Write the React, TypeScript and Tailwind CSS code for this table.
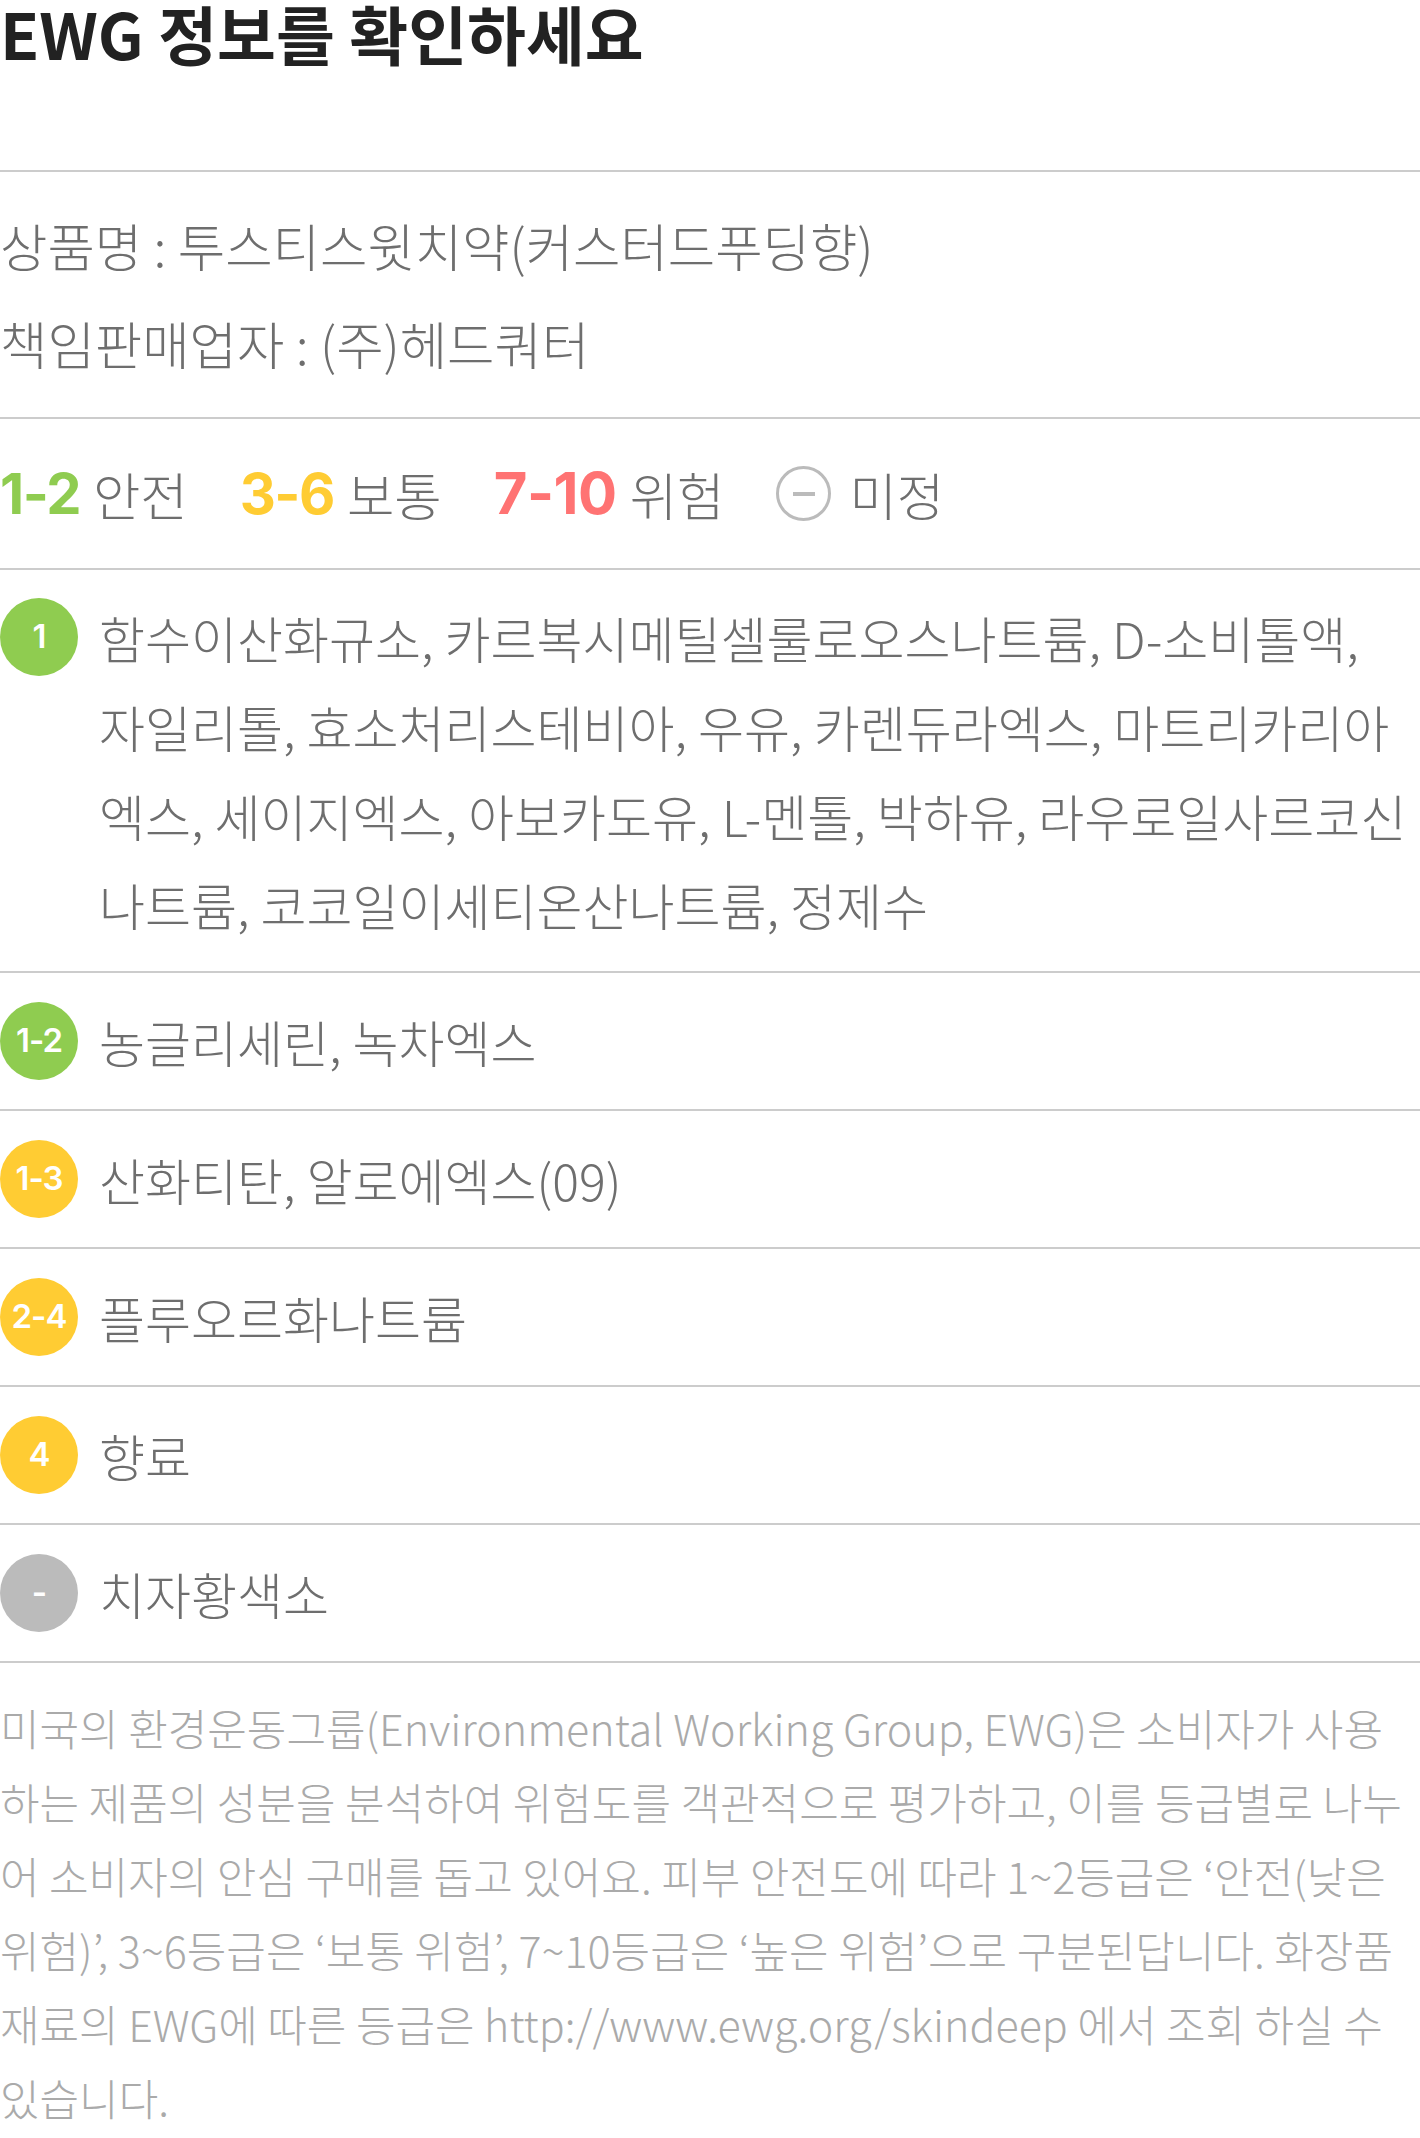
import React from 'react';

// ingredient lines are broken where the source layout breaks them
const ingredients = [
    {
        grade: '1',
        color: 'bg-[#8fcc50]',
        lines: [
            '함수이산화규소, 카르복시메틸셀룰로오스나트륨, D-소비톨액,',
            '자일리톨, 효소처리스테비아, 우유, 카렌듀라엑스, 마트리카리아',
            '엑스, 세이지엑스, 아보카도유, L-멘톨, 박하유, 라우로일사르코신',
            '나트륨, 코코일이세티온산나트륨, 정제수',
        ],
    },
    { grade: '1-2', color: 'bg-[#8fcc50]', lines: ['농글리세린, 녹차엑스'] },
    { grade: '1-3', color: 'bg-[#ffcc33]', lines: ['산화티탄, 알로에엑스(09)'] },
    { grade: '2-4', color: 'bg-[#ffcc33]', lines: ['플루오르화나트륨'] },
    { grade: '4', color: 'bg-[#ffcc33]', lines: ['향료'] },
    { grade: '-', color: 'bg-[#bbbbbb]', lines: ['치자황색소'] },
];

function Badge({ grade, color }: { grade: string; color: string }) {
    return (
        <div
            className={`${color} w-[78px] h-[78px] mt-[5px] shrink-0 rounded-full flex items-center justify-center text-white text-[33px] font-semibold font-['Inter',sans-serif] tracking-[-1px]`}
        >
            {grade}
        </div>
    );
}

export default function App() {
    return (
        <div className="w-[1420px] bg-white font-['Noto_Sans_CJK_KR','Noto_Sans',sans-serif]">
            {/* title */}
            <h1 className="h-[170px] text-[64px] leading-[64px] font-bold text-[#222222]">
                EWG 정보를 확인하세요
            </h1>

            {/* product info */}
            <div className="border-t-2 border-[#cccccc] pt-[24px] pb-[25px] text-[51.5px] leading-[98px] font-light text-[#6e6e6e]">
                <p>상품명 : 투스티스윗치약(커스터드푸딩향)</p>
                <p>책임판매업자 : (주)헤드쿼터</p>
            </div>

            {/* legend */}
            <div className="border-t-2 border-[#cccccc] h-[151px] flex items-center gap-[52px] text-[51.5px] font-light text-[#6e6e6e]">
                <div className="flex items-center gap-[13px]">
                    <span className="font-['Inter',sans-serif] font-bold text-[56px] text-[#8fcc50] tracking-[-1.5px]">1-2</span>
                    <span>안전</span>
                </div>
                <div className="flex items-center gap-[13px]">
                    <span className="font-['Inter',sans-serif] font-bold text-[56px] text-[#ffcc33] tracking-[-1.5px]">3-6</span>
                    <span>보통</span>
                </div>
                <div className="flex items-center gap-[13px]">
                    <span className="font-['Inter',sans-serif] font-bold text-[58px] text-[#ff7373] tracking-[-0.5px]">7-10</span>
                    <span>위험</span>
                </div>
                <div className="flex items-center gap-[18px]">
                    <span className="w-[55px] h-[55px] rounded-full border-[3px] border-[#bbbbbb] flex items-center justify-center">
                        <span className="w-[22px] h-[4px] bg-[#bbbbbb]" />
                    </span>
                    <span>미정</span>
                </div>
            </div>

            {/* ingredients */}
            {ingredients.map((item, i) => (
                <div
                    key={item.grade}
                    className={`border-t-2 border-[#cccccc] flex items-start gap-[21px] ${i === 0 ? 'pt-[23px] pb-[22px]' : 'pt-[24px] pb-[23px]'}`}
                >
                    <Badge grade={item.grade} color={item.color} />
                    <div className="flex-1 text-[50px] leading-[89px] font-light text-[#6e6e6e]">
                        {item.lines.map((line) => (
                            <p key={line} className="whitespace-nowrap">{line}</p>
                        ))}
                    </div>
                </div>
            ))}

            {/* description */}
            <div className="border-t-2 border-[#cccccc] pt-[27px] pr-[10px] text-[43px] leading-[74px] font-light text-[#aaaaaa]">
                미국의 환경운동그룹(Environmental Working Group, EWG)은 소비자가 사용하는 제품의 성분을 분석하여 위험도를 객관적으로 평가하고, 이를 등급별로 나누어 소비자의 안심 구매를 돕고 있어요. 피부 안전도에 따라 1~2등급은 ‘안전(낮은 위험)’, 3~6등급은 ‘보통 위험’, 7~10등급은 ‘높은 위험’으로 구분된답니다. 화장품 재료의 EWG에 따른 등급은 http://www.ewg.org/skindeep 에서 조회 하실 수 있습니다.
            </div>
        </div>
    );
}
